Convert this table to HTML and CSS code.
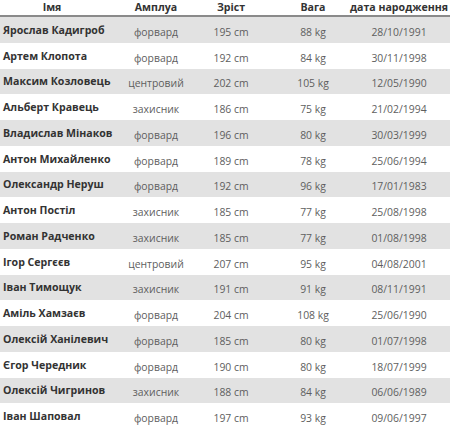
FILE: index.html
```html
<!DOCTYPE html>
<html lang="uk">
<head>
<meta charset="utf-8">
<link rel="stylesheet" href="styles.css">
</head>
<body>
<div class="roster">
  <div class="row head">
    <div class="cell">Імя</div>
    <div class="cell">Амплуа</div>
    <div class="cell">Зріст</div>
    <div class="cell">Вага</div>
    <div class="cell">дата народження</div>
  </div>
  <div class="row"><div class="cell name">Ярослав Кадигроб</div><div class="cell">форвард</div><div class="cell">195 cm</div><div class="cell">88 kg</div><div class="cell">28/10/1991</div></div>
  <div class="row"><div class="cell name">Артем Клопота</div><div class="cell">форвард</div><div class="cell">192 cm</div><div class="cell">84 kg</div><div class="cell">30/11/1998</div></div>
  <div class="row"><div class="cell name">Максим Козловець</div><div class="cell">центровий</div><div class="cell">202 cm</div><div class="cell">105 kg</div><div class="cell">12/05/1990</div></div>
  <div class="row"><div class="cell name">Альберт Кравець</div><div class="cell">захисник</div><div class="cell">186 cm</div><div class="cell">75 kg</div><div class="cell">21/02/1994</div></div>
  <div class="row"><div class="cell name">Владислав Мінаков</div><div class="cell">форвард</div><div class="cell">196 cm</div><div class="cell">80 kg</div><div class="cell">30/03/1999</div></div>
  <div class="row"><div class="cell name">Антон Михайленко</div><div class="cell">форвард</div><div class="cell">189 cm</div><div class="cell">78 kg</div><div class="cell">25/06/1994</div></div>
  <div class="row"><div class="cell name">Олександр Неруш</div><div class="cell">форвард</div><div class="cell">192 cm</div><div class="cell">96 kg</div><div class="cell">17/01/1983</div></div>
  <div class="row"><div class="cell name">Антон Постіл</div><div class="cell">захисник</div><div class="cell">185 cm</div><div class="cell">77 kg</div><div class="cell">25/08/1998</div></div>
  <div class="row"><div class="cell name">Роман Радченко</div><div class="cell">захисник</div><div class="cell">185 cm</div><div class="cell">77 kg</div><div class="cell">01/08/1998</div></div>
  <div class="row"><div class="cell name">Ігор Сергєєв</div><div class="cell">центровий</div><div class="cell">207 cm</div><div class="cell">95 kg</div><div class="cell">04/08/2001</div></div>
  <div class="row"><div class="cell name">Іван Тимощук</div><div class="cell">захисник</div><div class="cell">191 cm</div><div class="cell">91 kg</div><div class="cell">08/11/1991</div></div>
  <div class="row"><div class="cell name">Аміль Хамзаєв</div><div class="cell">форвард</div><div class="cell">204 cm</div><div class="cell">108 kg</div><div class="cell">25/06/1990</div></div>
  <div class="row"><div class="cell name">Олексій Ханілевич</div><div class="cell">форвард</div><div class="cell">185 cm</div><div class="cell">80 kg</div><div class="cell">01/07/1998</div></div>
  <div class="row"><div class="cell name">Єгор Чередник</div><div class="cell">форвард</div><div class="cell">190 cm</div><div class="cell">80 kg</div><div class="cell">18/07/1999</div></div>
  <div class="row"><div class="cell name">Олексій Чигринов</div><div class="cell">захисник</div><div class="cell">188 cm</div><div class="cell">84 kg</div><div class="cell">06/06/1989</div></div>
  <div class="row"><div class="cell name">Іван Шаповал</div><div class="cell">форвард</div><div class="cell">197 cm</div><div class="cell">93 kg</div><div class="cell">09/06/1997</div></div>
</div>
</body>
</html>
```
FILE: styles.css
```css
html, body {
  margin: 0;
  padding: 0;
  background: #fff;
  overflow: hidden;
}
.roster {
  width: 450px;
  font-family: "Open Sans", "Liberation Sans", sans-serif;
  font-size: 10.4px;
  color: #5e5e5e;
}
.row {
  display: grid;
  grid-template-columns: 104px 104px 46px 118px 54px;
  height: 25.75px;
}
.row:nth-child(even) {
  background: #e2e2e2;
}
.cell {
  display: flex;
  align-items: center;
  justify-content: center;
  white-space: nowrap;
  padding-top: 4px;
  box-sizing: border-box;
}
.cell.name {
  justify-content: flex-start;
  padding: 0 0 0 3px;
  font-weight: 700;
  font-size: 10.6px;
  color: #333;
}
.row.head {
  height: 17px;
  border-bottom: 2px solid #8a8a8a;
  box-sizing: border-box;
}
.row.head .cell {
  padding: 0 0 2px 0;
  font-weight: 700;
  font-size: 10.6px;
  color: #333;
}
```
